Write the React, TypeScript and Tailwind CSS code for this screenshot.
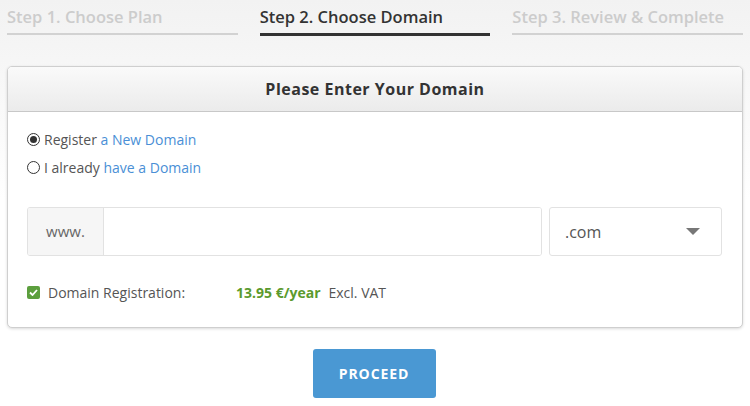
import React from "react";

export default function App() {
  const steps = [
    { label: "Step 1. Choose Plan", active: false },
    { label: "Step 2. Choose Domain", active: true },
    { label: "Step 3. Review & Complete", active: false },
  ];
  return (
    <div
      className="w-[750px] h-[406px] bg-[linear-gradient(to_bottom,#f2f2f2_0px,#f6f6f6_60px,#ffffff_200px)] overflow-hidden"
      style={{ fontFamily: '"Open Sans", "Liberation Sans", sans-serif' }}
    >
      <div className="flex gap-[22px] px-[7px] pt-[6px]">
        {steps.map((s) => (
          <div key={s.label} className="flex-1">
            <div
              className={`text-[16.5px] leading-[22px] font-semibold ${
                s.active ? "text-[#333333]" : "text-[#cccccc]"
              }`}
            >
              {s.label}
            </div>
            <div
              className={`mt-[5px] ${
                s.active ? "h-[3px] bg-[#333333]" : "h-[2px] bg-[#d2d2d2]"
              }`}
            />
          </div>
        ))}
      </div>

      <div className="mx-[7px] mt-[30px] rounded-[5px] border border-[#cfcfcf] bg-white shadow-[0_1px_3px_rgba(0,0,0,0.15)] overflow-hidden">
        <div className="h-[45px] flex items-center justify-center bg-[linear-gradient(to_bottom,#fafafa,#ebebeb)] border-b border-[#c8c8c8]">
          <span className="text-[16px] font-bold text-[#333333] tracking-[0.5px]">
            Please Enter Your Domain
          </span>
        </div>
        <div className="pl-[19px] pr-[20px] pt-[13px] pb-[23px]">
          <div className="flex flex-col text-[14px] text-[#555555]">
            <label className="flex items-center h-[28px]">
              <span className="w-[13px] h-[13px] rounded-full border border-[#333] flex items-center justify-center mr-[4px]">
                <span className="w-[7px] h-[7px] rounded-full bg-[#333]" />
              </span>
              <span>
                Register <span className="text-[#4a8fd6]">a New Domain</span>
              </span>
            </label>
            <label className="flex items-center h-[28px]">
              <span className="w-[13px] h-[13px] rounded-full border border-[#333] mr-[4px]" />
              <span>
                I already <span className="text-[#4a8fd6]">have a Domain</span>
              </span>
            </label>
          </div>

          <div className="flex gap-[7px] mt-[26px]">
            <div className="flex flex-1 h-[49px] rounded-[3px] border border-[#e2e2e2] overflow-hidden">
              <div className="w-[76px] flex items-center justify-center bg-[#f6f6f6] border-r border-[#e2e2e2] text-[15px] text-[#666666]">
                www.
              </div>
              <div className="flex-1 bg-white" />
            </div>
            <div className="w-[173px] h-[49px] rounded-[3px] border border-[#e2e2e2] bg-white flex items-center justify-between pl-[15px] pr-[21px]">
              <span className="text-[16px] text-[#555555]">.com</span>
              <svg width="14" height="7" viewBox="0 0 14 7">
                <path d="M0 0 L14 0 L7 7 Z" fill="#777777" />
              </svg>
            </div>
          </div>

          <div className="flex items-center h-[24px] mt-[24px] text-[14px] text-[#555555]">
            <span className="w-[13px] h-[13px] rounded-[2px] bg-[#5c9f3e] flex items-center justify-center mr-[8px]">
              <svg width="9" height="7" viewBox="0 0 9 7">
                <path d="M1 3.5 L3.5 6 L8 1" stroke="white" strokeWidth="1.8" fill="none" />
              </svg>
            </span>
            <span className="w-[188px]">Domain Registration:</span>
            <span className="font-bold text-[#5b9a2d] mr-[8px]">13.95 €/year</span>
            <span>Excl. VAT</span>
          </div>
        </div>
      </div>

      <div className="flex justify-center mt-[21px]">
        <button className="w-[123px] h-[49px] ml-[-2px] rounded-[3px] bg-[#4a98d3] text-white text-[14px] font-bold tracking-[0.9px]">
          PROCEED
        </button>
      </div>
    </div>
  );
}
